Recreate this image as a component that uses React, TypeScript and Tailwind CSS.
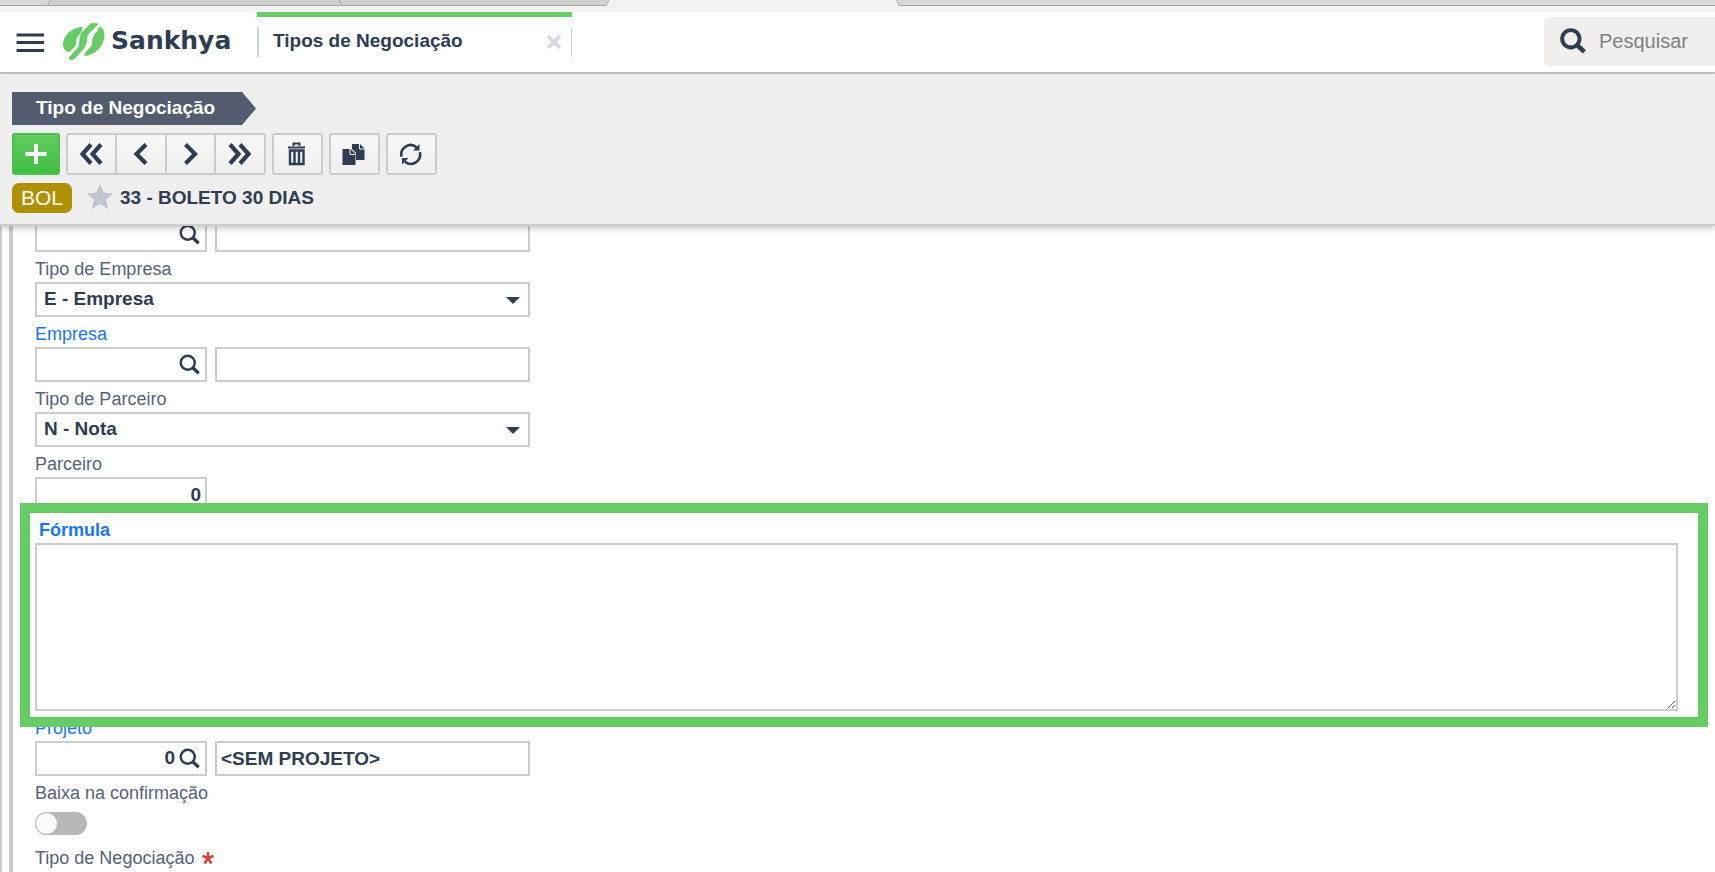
import React from "react";

const INK = "#2e3d52";

function Logo() {
  return (
    <svg viewBox="0 0 172 40" className="h-10 w-[172px]" role="img" aria-label="Sankhya">
      <g fill="#66cc66">
        <path d="M20.500 4.700C9 5.500 1 14 1 22.500c0 3.500 1.500 6 4.500 7.200 2 .5 3-.5 4-1.700l3-3c2-2.500 1.500-4 2-7 .5-4 3-5 4.500-7.500 1-2 1.500-3.500 1.500-5.800z" />
        <path d="M30 1.200h5.500c.8 0 1 .8.500 1.400L27.500 11c-2 2-2 3.500-2.300 6-.3 4-1 7-3.200 9.300L12.500 37c-1 1-3.500 1.200-5 .5-1-.4-1-1.500-.3-2.300L15 26.500c2-2.200 2-4 2.300-7 .3-4 .8-7.500 3.200-10L27.500 2.500c.7-.8 1.500-1.300 2.500-1.300z" />
        <path d="M37 4.500c3.500 1 5.500 4.500 5.500 8.500C42.500 23 34 33 22.500 34c0-2 .5-3.500 2-5l3.500-3.500c2-2.200 2-4 2.300-7 .3-3 1-5 3-7 2-2.200 3.400-4.200 3.700-7z" />
      </g>
      <text x="49" y="27" fill={INK} fontFamily="DejaVu Sans, sans-serif" fontWeight="700" fontSize="25">
        Sankhya
      </text>
    </svg>
  );
}

function Magnifier({ className, heavy }: { className: string; heavy?: boolean }) {
  return (
    <svg viewBox="0 0 24 24" className={className} fill="none" stroke={INK} strokeWidth={heavy ? 3.6 : 2.8} aria-hidden="true">
      <circle cx="10" cy="10" r="8" />
      <path d="M15.500 15.500L22.500 22" strokeWidth={heavy ? 4.2 : 3.8} />
    </svg>
  );
}

function ToolButton({ label, className, children }: { label: string; className: string; children: React.ReactNode }) {
  return (
    <button
      type="button"
      aria-label={label}
      className={`flex h-[42px] items-center justify-center border-2 border-[#ccc] bg-linear-to-b from-[#f8f8f8] to-[#efefef] pr-px ${className}`}
    >
      <svg viewBox="0 0 24 24" className="size-6" fill="none" stroke={INK} strokeWidth="4.200" aria-hidden="true">
        {children}
      </svg>
    </button>
  );
}

const labelClass = "block h-[30px] pt-[7px] text-[18px] leading-5";
const boxClass = "h-[35px] border-2 border-[#ccc] bg-white text-[19px] font-bold text-[#2e3d52] outline-none";

function SearchField({ id, label, code, name }: { id: string; label?: string; code?: string; name?: string }) {
  return (
    <div>
      {label && (
        <label htmlFor={id} className={`${labelClass} text-[#1a75ff]`}>
          {label}
        </label>
      )}
      <div className="flex gap-2">
        <div className={`${boxClass} flex w-[172px] items-center pr-[5px]`}>
          <input id={id} aria-label={label ? undefined : "Código"} defaultValue={code} className="min-w-0 flex-1 pr-1 text-right outline-none" />
          <button type="button" aria-label="Buscar">
            <Magnifier className="size-[21px]" />
          </button>
        </div>
        <input aria-label="Descrição" defaultValue={name} className={`${boxClass} w-[315px] px-1`} />
      </div>
    </div>
  );
}

function SelectField({ id, label, value }: { id: string; label: string; value: string }) {
  return (
    <div>
      <label htmlFor={id} className={`${labelClass} text-[#56627a]`}>
        {label}
      </label>
      <div className="relative w-[495px]">
        <select id={id} className={`${boxClass} block w-full appearance-none pl-[7px]`}>
          <option>{value}</option>
        </select>
        <svg viewBox="0 0 14 7" className="pointer-events-none absolute top-[15px] right-[10px] h-[7px] w-[14px]" fill={INK} aria-hidden="true">
          <path d="M0 0h14L7 7z" />
        </svg>
      </div>
    </div>
  );
}

export default function App() {
  return (
    <div className="flex h-screen flex-col overflow-hidden bg-white font-['Liberation_Sans',Arial,sans-serif] text-[#2e3d52]">
      <svg className="h-3 w-full shrink-0 bg-[#f2f2f2]" aria-hidden="true">
        <path d="M0 0H608L606 5.500H0z" fill="#d0d0d0" />
        <path d="M0 0H50L47 5H0z" fill="#d9d9d9" />
        <path d="M897 0H4000V5H899z" fill="#d9d9d9" />
        <path d="M0 5.500H606L609 0M47.500 5.500L50.500 0M339 0L342 5.500M896.500 0L899.500 5.500H4000" fill="none" stroke="#a6a6a6" />
      </svg>

      <header className="flex h-[62px] shrink-0 items-start border-b-2 border-[#c0c0c0] bg-white">
        <button type="button" aria-label="Menu" className="mt-[21px] ml-4">
          <svg viewBox="0 0 28 20" className="h-5 w-7" stroke={INK} strokeWidth="3" aria-hidden="true">
            <path d="M0.500 2H28M0.500 9.500H28M0.500 17.500H28" />
          </svg>
        </button>
        <div className="mt-[10px] ml-[18px] w-[195px]">
          <Logo />
        </div>
        <div className="w-[315px] border-t-[5px] border-[#66cc66]">
          <div className="mt-[10px] flex h-[30px] items-center border-r border-l-2 border-[#ccd4e0] pr-[10px] pl-[14px]">
            <span className="flex-1 pb-0.5 text-[19px] font-bold">Tipos de Negociação</span>
            <button type="button" aria-label="Fechar">
              <svg viewBox="0 0 14 14" className="size-[14px]" stroke="#d5d8de" strokeWidth="3.400" aria-hidden="true">
                <path d="M1 1L13 13M13 1L1 13" />
              </svg>
            </button>
          </div>
        </div>
        <label className="mt-[5px] ml-auto flex h-[49px] w-[171px] items-center gap-[13px] rounded-l-md bg-[#f0efee] pb-0.5 pl-4">
          <Magnifier heavy className="size-[26px] shrink-0" />
          <input type="search" aria-label="Pesquisar" placeholder="Pesquisar" className="min-w-0 flex-1 text-[20px] outline-none placeholder:text-[#808080]" />
        </label>
      </header>

      <section className="relative z-20 h-[152px] shrink-0 border-b-2 border-[#ccc] bg-[#efefef] px-3 pt-[18px] shadow-[0_3px_6px_rgba(0,0,0,0.2)]">
        <h1 className="flex h-[33px] w-[244px] items-center bg-[#525c6e] pl-6 text-[19px] font-bold text-white [clip-path:polygon(0_0,230px_0,100%_50%,230px_100%,0_100%)]">
          Tipo de Negociação
        </h1>
        <div className="mt-2 flex gap-[6px]">
          <button type="button" aria-label="Adicionar" className="flex h-[42px] w-12 items-center justify-center rounded-[3px] border-2 border-[#4cc24c] bg-linear-to-b from-[#62cb62] to-[#40be40]">
            <svg viewBox="0 0 22 22" className="size-[22px]" stroke="#fff" strokeWidth="4" aria-hidden="true">
              <path d="M11 1V21M0.500 11H21.500" />
            </svg>
          </button>
          <div className="flex">
            <ToolButton label="Primeiro" className="w-[51px] rounded-l-[3px]">
              <path d="M12 2.500L3.500 12L12 21.500M22 2.500L13.500 12L22 21.500" />
            </ToolButton>
            <ToolButton label="Anterior" className="w-[50px] border-l-0">
              <path d="M17 2.500L7.500 12L17 21.500" />
            </ToolButton>
            <ToolButton label="Próximo" className="w-[49px] border-l-0">
              <path d="M7.500 2.500L17 12L7.500 21.500" />
            </ToolButton>
            <ToolButton label="Último" className="w-[50px] rounded-r-[3px] border-l-0">
              <path d="M2 2.500L10.500 12L2 21.500M12 2.500L20.500 12L12 21.500" />
            </ToolButton>
          </div>
          <ToolButton label="Excluir" className="w-[51px] rounded-[3px]">
            <path d="M3 5.500H20M8.500 4V1.500H14.500V4" strokeWidth="2" />
            <path d="M5 8.500V22H18.500V8.500zM9.500 8V22M14 8V22" strokeWidth="2.400" />
          </ToolButton>
          <ToolButton label="Duplicar" className="w-[51px] rounded-[3px]">
            <path d="M10 2h8l4.500 4.500V18H14v-7l-4-4z" fill={INK} stroke="none" />
            <path d="M17.500 2v5h5" stroke="#f3f3f3" strokeWidth="1" />
            <path d="M0.500 7h8l5 5v11h-13z" fill={INK} stroke="none" />
            <path d="M8 7v5.500h5.500" stroke="#f3f3f3" strokeWidth="1" />
          </ToolButton>
          <ToolButton label="Atualizar" className="w-[51px] rounded-[3px]">
            <path d="M2.600 14.600A9.300 9.300 0 0 1 17.500 5.200M20.800 10.200A9.300 9.300 0 0 1 6 19.800" strokeWidth="2.600" />
            <path d="M20.500 2v6.500h-6.500zM3 22.500V16h6.500z" fill={INK} stroke="none" />
          </ToolButton>
        </div>
        <div className="mt-2 flex items-center">
          <span className="flex h-[30px] w-[60px] items-center justify-center rounded-[7px] bg-[#b09000] text-[21px] text-white">BOL</span>
          <svg viewBox="0 0 26 25" className="-mt-1 ml-[15px] h-[25px] w-[26px]" fill="#c0c4cc" aria-hidden="true">
            <path d="M13 0l3.800 8.700 9.200.8-7 6.200 2.200 9L13 19.900l-8.200 4.800 2.200-9-7-6.200 9.200-.8z" />
          </svg>
          <span className="ml-[7px] text-[19px] font-bold">33 - BOLETO 30 DIAS</span>
        </div>
      </section>

      <main className="flex min-h-0 flex-1 overflow-hidden border-l-2 border-[#ccc] pl-[7px]">
        <form className="-mt-[9px] min-w-0 flex-1 border-l-4 border-[#ccc] pl-[22px]">
          <SearchField id="anterior" />
          <SelectField id="tipo-empresa" label="Tipo de Empresa" value="E - Empresa" />
          <SearchField id="empresa" label="Empresa" />
          <SelectField id="tipo-parceiro" label="Tipo de Parceiro" value="N - Nota" />
          <label htmlFor="parceiro" className={`${labelClass} text-[#56627a]`}>
            Parceiro
          </label>
          <input id="parceiro" defaultValue="0" className={`${boxClass} block w-[172px] px-1 text-right`} />

          <div className="relative z-10 -mt-[9px] mr-[7px] -ml-[15px] h-56 border-[10px] border-[#66cc66] bg-white pr-5 pl-[5px]">
            <label htmlFor="formula" className={`${labelClass} pl-1 font-bold text-[#1a75ff]`}>
              Fórmula
            </label>
            <textarea id="formula" className="block h-[168px] w-full resize border-2 border-[#ccc] outline-none" />
          </div>

          <div className="-mt-4">
            <SearchField id="projeto" label="Projeto" code="0" name="<SEM PROJETO>" />
          </div>
          <label htmlFor="baixa" className={`${labelClass} text-[#56627a]`}>
            Baixa na confirmação
          </label>
          <div className="h-[35px] pt-[6px]">
            <input
              id="baixa"
              type="checkbox"
              role="switch"
              className="block h-[23px] w-[52px] appearance-none rounded-full bg-[#b8b8b8] p-px before:block before:size-[21px] before:rounded-full before:bg-[#fafafa] checked:before:ml-auto"
            />
          </div>
          <div className={`${labelClass} flex gap-2 text-[#56627a]`}>
            Tipo de Negociação
            <svg viewBox="0 0 12 12" className="mt-1 size-3" stroke="#e04030" strokeWidth="2.400" aria-hidden="true">
              <path d="M6 6V0M6 6L0.500 4M6 6L11.500 4M6 6L2.500 11.500M6 6L9.500 11.500" />
            </svg>
          </div>
        </form>
      </main>
    </div>
  );
}
